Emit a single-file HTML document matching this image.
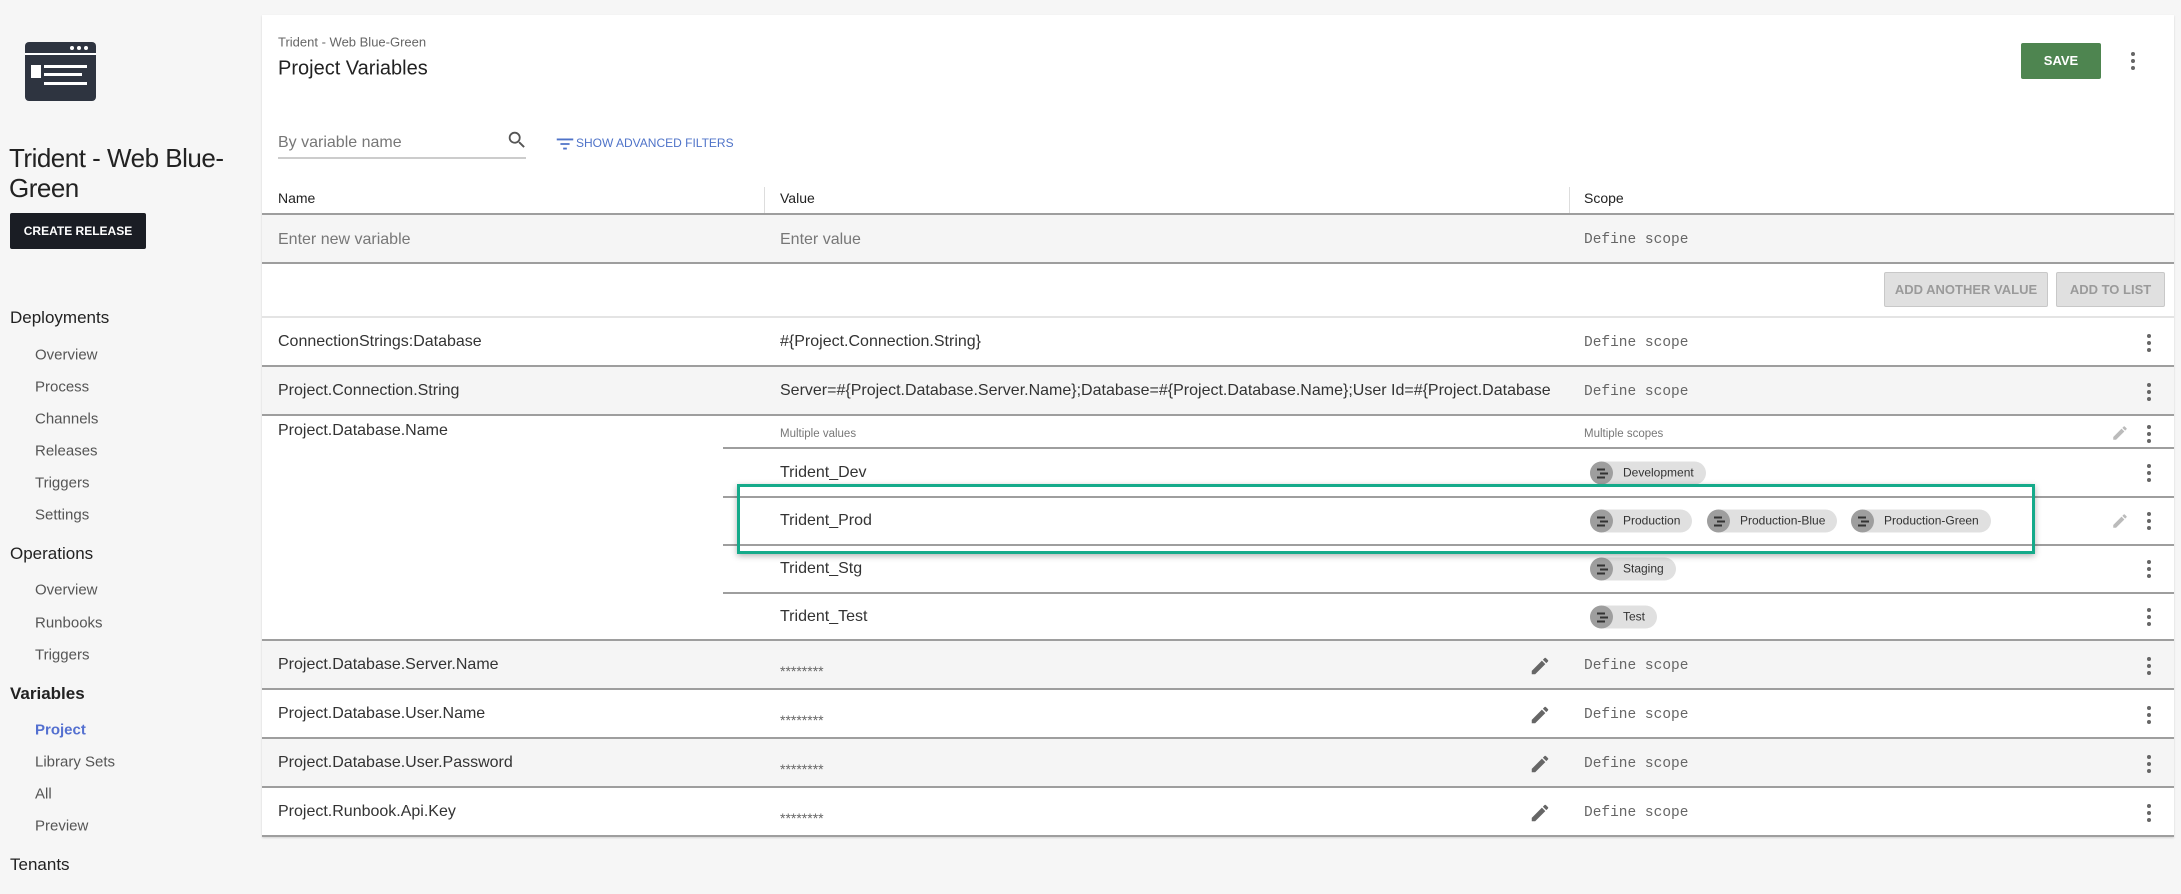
<!DOCTYPE html>
<html><head><meta charset="utf-8">
<style>
*{margin:0;padding:0;box-sizing:border-box}
body{width:2181px;height:894px;background:#f6f6f6;font-family:"Liberation Sans",sans-serif;color:#333;position:relative;overflow:hidden}
.a{position:absolute;white-space:nowrap}
.nh{position:absolute;left:10px;font-size:17px;color:#222;transform:translateY(-50%)}
.ni{position:absolute;left:35px;font-size:15px;color:#555;transform:translateY(-50%)}
#panel{position:absolute;left:262px;top:15px;width:1912px;height:822px;background:#fff;box-shadow:0 1px 2px rgba(0,0,0,.15)}
.row{position:absolute;left:0;width:1912px;border-bottom:2px solid #9e9e9e}
.g{background:#f5f5f5}
.t{position:absolute;font-size:16px;color:#333;transform:translateY(-50%);white-space:nowrap}
.m{font-family:"Liberation Mono",monospace;font-size:14.5px;color:#666}
.s{font-size:14px;color:#666}
.keb{position:absolute;width:4px;height:18px;transform:translateY(-50%)}
.keb:before{content:"";position:absolute;left:0;top:0;width:4px;height:4px;border-radius:2px;background:#666;box-shadow:0 7px 0 #666,0 14px 0 #666}
.chip{position:absolute;height:23px;border-radius:12px;background:#e0e0e0;font-size:12px;color:#333;line-height:23px;padding-left:33px;padding-right:12px;transform:translateY(-50%)}
.chip:before{content:"";position:absolute;left:0;top:0;width:23px;height:23px;border-radius:12px;background:#9e9e9e}
.chip:after{content:"";position:absolute;left:7px;top:7px;width:8px;height:2px;background:#333;box-shadow:3px 4px 0 #333,0 8px 0 #333}
.pen{position:absolute;transform:translateY(-50%)}
</style></head><body>
<svg class="a" style="left:25px;top:42px" width="71" height="59" viewBox="0 0 71 59"><rect x="0" y="0" width="71" height="59" rx="4" fill="#2e3440"/><rect x="0" y="11" width="71" height="2" fill="#fff"/><circle cx="47" cy="6" r="2" fill="#fff"/><circle cx="54" cy="6" r="2" fill="#fff"/><circle cx="61" cy="6" r="2" fill="#fff"/><rect x="6" y="23" width="10" height="13" fill="#fff"/><rect x="19" y="23" width="43" height="3" fill="#fff"/><rect x="19" y="31" width="38" height="3" fill="#fff"/><rect x="19" y="40" width="43" height="3" fill="#fff"/></svg>
<div class="a" style="left:9px;top:143px;font-size:26px;line-height:30px;color:#222;letter-spacing:-0.5px">Trident - Web Blue-<br>Green</div>
<div class="a" style="left:10px;top:213px;width:136px;height:36px;background:#1a1d24;border-radius:2px;color:#fff;font-size:12px;font-weight:bold;text-align:center;line-height:36px">CREATE RELEASE</div>
<div class="nh" style="top:318px">Deployments</div>
<div class="ni" style="top:355px">Overview</div>
<div class="ni" style="top:387px">Process</div>
<div class="ni" style="top:419px">Channels</div>
<div class="ni" style="top:451px">Releases</div>
<div class="ni" style="top:483px">Triggers</div>
<div class="ni" style="top:515px">Settings</div>
<div class="nh" style="top:554px">Operations</div>
<div class="ni" style="top:590px">Overview</div>
<div class="ni" style="top:623px">Runbooks</div>
<div class="ni" style="top:655px">Triggers</div>
<div class="nh" style="top:694px;font-weight:bold;color:#222">Variables</div>
<div class="ni" style="top:730px;color:#5470d0;font-weight:bold">Project</div>
<div class="ni" style="top:762px">Library Sets</div>
<div class="ni" style="top:794px">All</div>
<div class="ni" style="top:826px">Preview</div>
<div class="nh" style="top:865px">Tenants</div>

<div id="panel">
<div class="t" style="left:16px;top:27px;font-size:13px;color:#666">Trident - Web Blue-Green</div>
<div class="t" style="left:16px;top:54px;font-size:20px;color:#222">Project Variables</div>
<div class="a" style="left:1759px;top:28px;width:80px;height:36px;background:#4e8550;border-radius:2px;color:#fff;font-size:13px;font-weight:bold;text-align:center;line-height:36px">SAVE</div>
<div class="keb" style="left:1869px;top:46px"></div>

<div class="t" style="left:16px;top:128px;color:#777;font-size:16px">By variable name</div>
<div class="a" style="left:16px;top:142px;width:248px;height:2px;background:#ccc"></div>
<svg class="a" style="left:244px;top:114px" width="22" height="22" viewBox="0 0 24 24"><path d="M15.5 14h-.79l-.28-.27A6.47 6.47 0 0 0 16 9.5 6.5 6.5 0 1 0 9.5 16c1.61 0 3.09-.59 4.23-1.57l.27.28v.79l5 4.99L20.49 19l-4.99-5zm-6 0C7.01 14 5 11.99 5 9.5S7.01 5 9.5 5 14 7.01 14 9.5 11.99 14 9.5 14z" fill="#555"/></svg>
<svg class="a" style="left:292px;top:118px" width="22" height="22" viewBox="0 0 24 24"><path d="M3 6h18v2H3zm4 5h10v2H7zm3 5h4v2h-4z" fill="#4f73c8"/></svg>
<div class="t" style="left:314px;top:128px;font-size:12px;color:#4f73c8">SHOW ADVANCED FILTERS</div>

<div class="t" style="left:16px;top:183px;font-size:14px;color:#222">Name</div>
<div class="a" style="left:502px;top:172px;width:1px;height:26px;background:#ddd"></div>
<div class="t" style="left:518px;top:183px;font-size:14px;color:#222">Value</div>
<div class="a" style="left:1307px;top:172px;width:1px;height:26px;background:#ddd"></div>
<div class="t" style="left:1322px;top:183px;font-size:14px;color:#222">Scope</div>

<div class="a" style="left:0;top:198px;width:1912px;height:2px;background:#9e9e9e"></div>
<div class="row g" style="top:200px;height:49px"></div>
<div class="t" style="left:16px;top:225px;color:#777">Enter new variable</div>
<div class="t" style="left:518px;top:225px;color:#777">Enter value</div>
<div class="t m" style="left:1322px;top:225px">Define scope</div>

<div class="a" style="left:1622px;top:257px;width:164px;height:35px;background:#e0e0e0;border:1px solid #c8c8c8;border-radius:2px;font-size:13px;font-weight:bold;color:#9a9a9a;text-align:center;line-height:33px">ADD ANOTHER VALUE</div>
<div class="a" style="left:1794px;top:257px;width:109px;height:35px;background:#e0e0e0;border:1px solid #c8c8c8;border-radius:2px;font-size:13px;font-weight:bold;color:#9a9a9a;text-align:center;line-height:33px">ADD TO LIST</div>
<div class="a" style="left:0;top:301px;width:1912px;height:2px;background:#e4e4e4"></div>

<div class="row" style="top:303px;height:49px"></div>
<div class="t" style="left:16px;top:327px">ConnectionStrings:Database</div>
<div class="t" style="left:518px;top:327px">#{Project.Connection.String}</div>
<div class="t m" style="left:1322px;top:328px">Define scope</div>
<div class="keb" style="left:1885px;top:328px"></div>

<div class="row g" style="top:352px;height:49px"></div>
<div class="t" style="left:16px;top:376px">Project.Connection.String</div>
<div class="t" style="left:518px;top:376px;width:772px;overflow:hidden">Server=#{Project.Database.Server.Name};Database=#{Project.Database.Name};User Id=#{Project.Database.User.Name}</div>
<div class="t m" style="left:1322px;top:377px">Define scope</div>
<div class="keb" style="left:1885px;top:377px"></div>

<div class="row" style="top:401px;height:225px"></div>
<div class="t" style="left:16px;top:416px">Project.Database.Name</div>
<div class="t" style="left:518px;top:419px;font-size:11.5px;color:#777">Multiple values</div>
<div class="t" style="left:1322px;top:419px;font-size:11.5px;color:#777">Multiple scopes</div>
<svg class="pen" style="left:1849px;top:418px" width="18" height="18" viewBox="0 0 24 24"><path d="M3 17.25V21h3.75L17.81 9.94l-3.75-3.75L3 17.25zM20.71 7.04a1 1 0 0 0 0-1.41l-2.34-2.34a1 1 0 0 0-1.41 0l-1.83 1.83 3.75 3.75 1.830-1.83z" fill="#bbb"/></svg>
<div class="keb" style="left:1885px;top:419px"></div>
<div class="a" style="left:461px;top:432px;width:1451px;height:2px;background:#9e9e9e"></div>
<div class="t" style="left:518px;top:458px">Trident_Dev</div>
<div class="chip" style="left:1328px;top:458px">Development</div>
<div class="keb" style="left:1885px;top:458px"></div>
<div class="a" style="left:461px;top:481px;width:1451px;height:2px;background:#9e9e9e"></div>
<div class="t" style="left:518px;top:506px">Trident_Prod</div>
<div class="chip" style="left:1328px;top:506px">Production</div>
<div class="chip" style="left:1445px;top:506px">Production-Blue</div>
<div class="chip" style="left:1589px;top:506px">Production-Green</div>
<svg class="pen" style="left:1849px;top:506px" width="18" height="18" viewBox="0 0 24 24"><path d="M3 17.25V21h3.75L17.81 9.94l-3.75-3.75L3 17.25zM20.71 7.04a1 1 0 0 0 0-1.41l-2.34-2.34a1 1 0 0 0-1.41 0l-1.83 1.83 3.75 3.75 1.83-1.83z" fill="#bbb"/></svg>
<div class="keb" style="left:1885px;top:506px"></div>
<div class="a" style="left:461px;top:529px;width:1451px;height:2px;background:#9e9e9e"></div>
<div class="t" style="left:518px;top:554px">Trident_Stg</div>
<div class="chip" style="left:1328px;top:554px">Staging</div>
<div class="keb" style="left:1885px;top:554px"></div>
<div class="a" style="left:461px;top:577px;width:1451px;height:2px;background:#9e9e9e"></div>
<div class="t" style="left:518px;top:602px">Trident_Test</div>
<div class="chip" style="left:1328px;top:602px">Test</div>
<div class="keb" style="left:1885px;top:602px"></div>

<div class="a" style="left:475px;top:469px;width:1298px;height:70px;border:3px solid #15aa8a;box-shadow:0 2px 6px rgba(0,0,0,.3)"></div>

<div class="row g" style="top:626px;height:49px"></div>
<div class="t" style="left:16px;top:650px">Project.Database.Server.Name</div>
<div class="t s" style="left:518px;top:656px">********</div>
<svg class="pen" style="left:1267px;top:651px" width="22" height="22" viewBox="0 0 24 24"><path d="M3 17.25V21h3.75L17.81 9.94l-3.75-3.75L3 17.25zM20.71 7.04a1 1 0 0 0 0-1.41l-2.34-2.34a1 1 0 0 0-1.41 0l-1.83 1.83 3.75 3.75 1.83-1.83z" fill="#666"/></svg>
<div class="t m" style="left:1322px;top:651px">Define scope</div>
<div class="keb" style="left:1885px;top:651px"></div>

<div class="row" style="top:675px;height:49px"></div>
<div class="t" style="left:16px;top:699px">Project.Database.User.Name</div>
<div class="t s" style="left:518px;top:705px">********</div>
<svg class="pen" style="left:1267px;top:700px" width="22" height="22" viewBox="0 0 24 24"><path d="M3 17.25V21h3.75L17.81 9.94l-3.75-3.75L3 17.25zM20.71 7.04a1 1 0 0 0 0-1.41l-2.34-2.34a1 1 0 0 0-1.41 0l-1.83 1.83 3.75 3.75 1.83-1.83z" fill="#666"/></svg>
<div class="t m" style="left:1322px;top:700px">Define scope</div>
<div class="keb" style="left:1885px;top:700px"></div>

<div class="row g" style="top:724px;height:49px"></div>
<div class="t" style="left:16px;top:748px">Project.Database.User.Password</div>
<div class="t s" style="left:518px;top:754px">********</div>
<svg class="pen" style="left:1267px;top:749px" width="22" height="22" viewBox="0 0 24 24"><path d="M3 17.25V21h3.75L17.81 9.94l-3.75-3.75L3 17.25zM20.71 7.04a1 1 0 0 0 0-1.41l-2.34-2.34a1 1 0 0 0-1.41 0l-1.83 1.83 3.75 3.75 1.83-1.83z" fill="#666"/></svg>
<div class="t m" style="left:1322px;top:749px">Define scope</div>
<div class="keb" style="left:1885px;top:749px"></div>

<div class="row" style="top:773px;height:49px"></div>
<div class="t" style="left:16px;top:797px">Project.Runbook.Api.Key</div>
<div class="t s" style="left:518px;top:803px">********</div>
<svg class="pen" style="left:1267px;top:798px" width="22" height="22" viewBox="0 0 24 24"><path d="M3 17.25V21h3.75L17.81 9.94l-3.75-3.75L3 17.25zM20.71 7.04a1 1 0 0 0 0-1.41l-2.34-2.34a1 1 0 0 0-1.41 0l-1.83 1.83 3.75 3.75 1.83-1.83z" fill="#666"/></svg>
<div class="t m" style="left:1322px;top:798px">Define scope</div>
<div class="keb" style="left:1885px;top:798px"></div>
</div>
</body></html>
